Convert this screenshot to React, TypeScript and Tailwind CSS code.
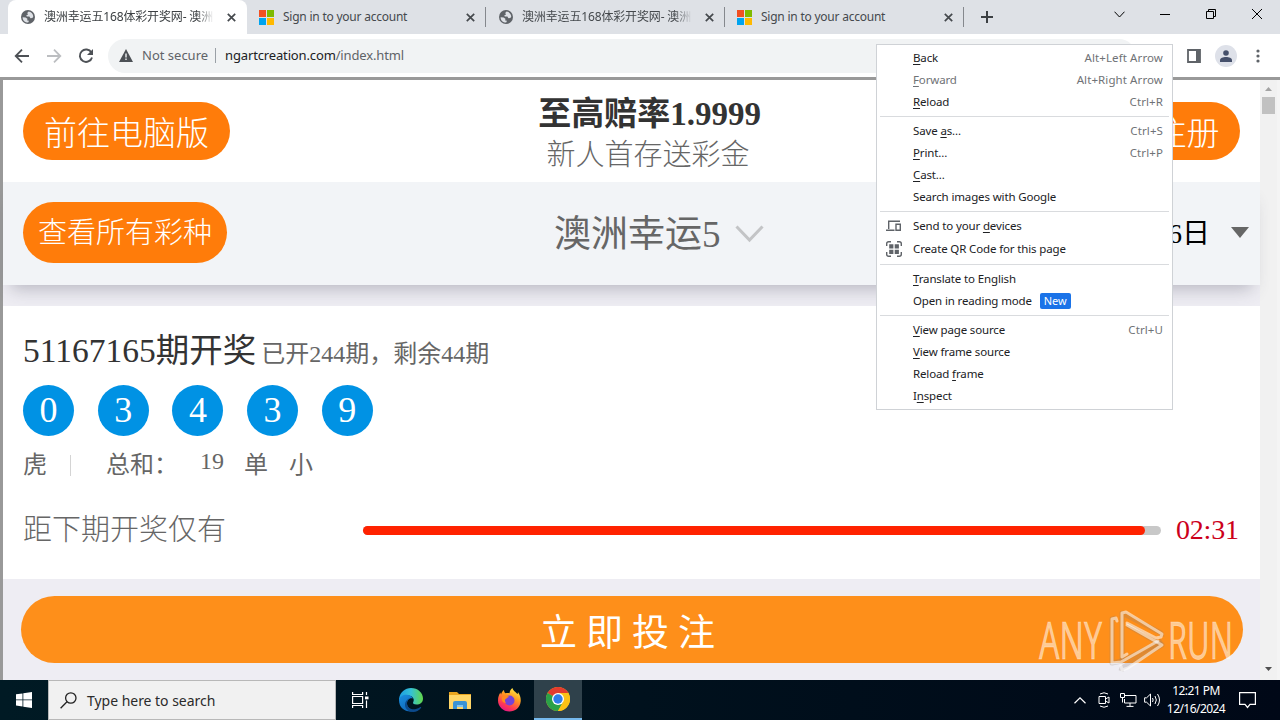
import React from 'react';

interface TabProps {
  kind: 'globe' | 'microsoft';
  title: string;
  active?: boolean;
  divider?: boolean;
}

const tabs: TabProps[] = [
  { kind: 'globe', title: '澳洲幸运五168体彩开奖网- 澳洲', active: true },
  { kind: 'microsoft', title: 'Sign in to your account', divider: true },
  { kind: 'globe', title: '澳洲幸运五168体彩开奖网- 澳洲', divider: true },
  { kind: 'microsoft', title: 'Sign in to your account', divider: true },
];

const GlobeIcon = () => (
  <svg width="14" height="14" viewBox="0 0 14 14">
    <circle cx="7" cy="7" r="7" fill="#5f6368" />
    <path d="M1.6 7.2 4.6 7.4 6.4 8.8 6.2 10.6 8 10.8 7.2 12.6C4.4 12.8 1.6 10.6 1.6 7.2ZM7.6 1.6 6.2 3 7 4.4 5.2 5.6 5.8 6.6 8.4 6.6 9.4 8.2 11.4 8 12.3 6.4C12 4 10 1.8 7.6 1.6Z" fill="#dee1e6" />
  </svg>
);

const MicrosoftIcon = () => (
  <svg width="15" height="15" viewBox="0 0 15 15">
    <path fill="#f25022" d="M0 0h7v7H0z" />
    <path fill="#7fba00" d="M8 0h7v7H8z" />
    <path fill="#00a4ef" d="M0 8h7v7H0z" />
    <path fill="#ffb900" d="M8 8h7v7H8z" />
  </svg>
);

const Tab: React.FC<TabProps> = ({ kind, title, active, divider }) => (
  <div
    className={`relative flex h-full w-[239px] items-center ${
      active ? 'rounded-t-lg bg-white text-[#3c4043]' : 'text-[#45494d]'
    }`}
  >
    <span className={`flex w-6 shrink-0 ${kind === 'globe' ? 'ml-[13px]' : 'ml-3'}`}>
      {kind === 'globe' ? <GlobeIcon /> : <MicrosoftIcon />}
    </span>
    <span
      className={`w-[170px] text-[12px] leading-4 whitespace-nowrap ${
        kind === 'globe'
          ? '-ml-px tracking-[-0.15px] [mask-image:linear-gradient(to_right,black_90%,transparent)]'
          : 'tracking-[-0.23px]'
      }`}
    >
      {title}
    </span>
    <svg className="ml-[13px]" width="9" height="9" viewBox="0 0 9 9">
      <path d="M.8.8 8.2 8.2M8.2.8.8 8.2" stroke="#45494d" strokeWidth="1.7" />
    </svg>
    {divider && <span className="ml-auto h-5 w-px bg-[#85888d]" />}
  </div>
);

const TabStrip = () => (
  <div className="flex h-[34px] bg-[#dee1e6] pl-2">
    {tabs.map((tab, index) => (
      <Tab key={index} {...tab} />
    ))}
    <svg className="mt-[11px] ml-[17px]" width="12" height="12" viewBox="0 0 12 12">
      <path d="M6 0v12M0 6h12" stroke="#3c4043" strokeWidth="2" />
    </svg>
    <div className="ml-auto flex h-7 items-center text-black">
      <span className="flex w-[46px] justify-center">
        <svg width="11" height="7" viewBox="0 0 11 7" fill="none" stroke="currentColor">
          <path d="M.5.7 5.5 6 10.5.7" />
        </svg>
      </span>
      <span className="flex w-[46px] justify-center">
        <svg width="10" height="10" viewBox="0 0 10 10" fill="none" stroke="currentColor">
          <path d="M0 5.5h10" />
        </svg>
      </span>
      <span className="flex w-[46px] justify-center">
        <svg width="10" height="10" viewBox="0 0 10 10" fill="none" stroke="currentColor">
          <path d="M.5 2.500h7v7h-7zM2.5 2.500v-2h7v7h-2" />
        </svg>
      </span>
      <span className="flex w-[46px] justify-center">
        <svg width="10" height="10" viewBox="0 0 10 10" fill="none" stroke="currentColor">
          <path d="M0 0 10 10M10 0 0 10" />
        </svg>
      </span>
    </div>
  </div>
);

const Toolbar = () => (
  <div className="flex h-[43px] items-center bg-white pl-[14px]">
    <svg width="16" height="16" viewBox="0 0 16 16" fill="none" stroke="#4d5156" strokeWidth="1.8">
      <path d="M15 8H2M8 1.7 1.7 8 8 14.3" />
    </svg>
    <svg className="ml-4" width="16" height="16" viewBox="0 0 16 16" fill="none" stroke="#bcbec1" strokeWidth="1.8">
      <path d="M1 8h13M8 1.7 14.3 8 8 14.3" />
    </svg>
    <svg className="ml-4" width="16" height="16" viewBox="0 0 16 16">
      <path d="M13.4 4.6A6.2 6.2 0 1 0 14 9.4" fill="none" stroke="#4d5156" strokeWidth="1.9" />
      <path d="M15 1v6H9z" fill="#4d5156" />
    </svg>
    <div className="ml-[14px] flex h-[34px] w-[1028px] items-center rounded-full bg-[#f1f3f4] pl-[11px] text-[13px]">
      <svg width="14" height="13" viewBox="0 0 14 13">
        <path d="M7 0 14 13H0z" fill="#4d5156" />
        <path d="M7 4.5v4M7 9.6v1.5" stroke="#f1f3f4" strokeWidth="1.4" />
      </svg>
      <span className="ml-[9px] w-[73px] whitespace-nowrap text-[#5f6368]">Not secure</span>
      <span className="h-[15px] w-px bg-[#9aa0a6]" />
      <span className="ml-[9px] tracking-[-0.14px] whitespace-nowrap text-[#202124]">
        ngartcreation.com<span className="text-[#5f6368]">/index.html</span>
      </span>
    </div>
    <svg className="ml-[51px]" width="14" height="14" viewBox="0 0 14 14">
      <path d="M1 1h12v12H1z" fill="none" stroke="#5f6368" strokeWidth="1.8" />
      <path d="M9 1h4v12H9z" fill="#5f6368" />
    </svg>
    <span className="ml-[14px] flex h-[22px] w-[22px] items-center justify-center rounded-full bg-[#dee1e9]">
      <svg width="12" height="12" viewBox="0 0 12 12" fill="#45506b">
        <circle cx="6" cy="3" r="2.8" />
        <path d="M0 12V10.200C0 8 3 7 6 7s6 1 6 3.200V12z" />
      </svg>
    </span>
    <svg className="ml-[19px]" width="4" height="14" viewBox="0 0 4 14" fill="#5f6368">
      <circle cx="2" cy="2" r="1.6" />
      <circle cx="2" cy="7" r="1.6" />
      <circle cx="2" cy="12" r="1.6" />
    </svg>
  </div>
);

const balls = [0, 3, 4, 3, 9];

const Page = () => (
  <div className="flex w-[1257px] flex-col bg-[#eeedf3] font-['Liberation_Serif','Noto_Sans_CJK_SC',serif] font-light whitespace-nowrap">
    <div className="flex h-[102px] items-start justify-between bg-white pt-[22px] pr-5 pl-5">
      <button className="h-[58px] w-[207px] rounded-full bg-[#ff7c0a] pt-[2px] text-[33px] leading-[60px] text-white">
        前往电脑版
      </button>
      <div className="-mt-[8px] mr-[66px] ml-auto flex flex-col items-center">
        <div className="h-[40px] text-[33px] leading-[41px] font-bold text-[#333]">至高赔率1.9999</div>
        <div className="mr-[3px] h-[40px] text-[29px] leading-[43px] text-[#666]">新人首存送彩金</div>
      </div>
      <button className="ml-[306px] h-[58px] w-[107px] rounded-full bg-[#ff7c0a] pt-[2px] text-[33px] leading-[60px] text-white">
        注册
      </button>
    </div>
    <div className="relative flex h-[103px] items-center bg-[#f2f4f7] pb-[2px] pl-5 shadow-[0_12px_16px_-8px_rgba(60,60,80,0.3)]">
      <button className="h-[61px] w-[204px] rounded-full bg-[#ff7c0a] pt-px text-[29px] leading-[60px] text-white">
        查看所有彩种
      </button>
      <span className="mt-[4px] ml-[327px] text-[37px] leading-[50px] font-normal text-[#666]">澳洲幸运5</span>
      <svg className="mt-[2px] ml-[14px]" width="29" height="18" viewBox="0 0 29 18">
        <path d="M1.5 1.5 14.5 15 27.5 1.5" fill="none" stroke="#c3c4c6" strokeWidth="3" />
      </svg>
      <span className="mt-[3px] mr-[21px] ml-auto text-[28px] leading-[40px] font-normal text-black">12月16日</span>
      <svg className="mr-[11px]" width="18" height="11" viewBox="0 0 18 11">
        <path d="M0 0h18L9 11z" fill="#666" />
      </svg>
    </div>
    <div className="relative mt-[21px] flex h-[273px] flex-col bg-white pl-5 text-[#666]">
      <div className="mt-[23px] flex h-[44px] items-baseline font-normal">
        <span className="text-[33.5px] leading-[44px] text-[#333]">51167165期开奖</span>
        <span className="ml-[5px] text-[24px] leading-[44px]">已开244期，剩余44期</span>
      </div>
      <div className="mt-3 flex gap-[23.7px]">
        {balls.map((ball, index) => (
          <span key={index} className="h-[51px] w-[51px] rounded-full bg-[#0092e4] text-center text-[36px] leading-[50px] text-white">
            {ball}
          </span>
        ))}
      </div>
      <div className="mt-[11px] flex h-[36px] items-center text-[24px] leading-[36px] font-normal">
        <span>虎</span>
        <span className="ml-[23px] h-[21px] w-px bg-[#d4d4d4]" />
        <span className="ml-[35px] w-[94px]">总和：</span>
        <span className="-mt-2">19</span>
        <span className="ml-5">单</span>
        <span className="ml-[21px]">小</span>
      </div>
      <div className="mt-[27px] flex h-[40px] items-center">
        <span className="w-[340px] text-[29px] leading-[40px]">距下期开奖仅有</span>
        <span className="h-[9px] w-[798px] rounded-full bg-[#c8c8c8]">
          <span className="block h-full w-[782px] rounded-full bg-[#ff2200]" />
        </span>
        <span className="ml-[15px] text-[28px] leading-[40px] tracking-[-0.2px] text-[#cc001b]">02:31</span>
      </div>
    </div>
    <button className="mt-[17px] ml-[18px] h-[67px] w-[1222px] rounded-full bg-[#fe8f1a] pt-[3px] text-[37px] leading-[70px] font-normal tracking-[9px] text-white">
      立即投注
    </button>
  </div>
);

const Scrollbar = () => (
  <div className="flex w-[17px] flex-col items-center bg-[#f1f1f1] pt-[7px] pb-[9px]">
    <svg width="7" height="4" viewBox="0 0 7 4">
      <path d="M3.5 0 7 4H0z" fill="#a3a3a3" />
    </svg>
    <span className="mt-[6px] h-[17px] w-[13px] bg-[#c1c1c1]" />
    <svg className="mt-auto" width="7" height="4" viewBox="0 0 7 4">
      <path d="M0 0h7L3.5 4z" fill="#505050" />
    </svg>
  </div>
);

interface MenuEntry {
  label: string;
  // index of the underlined access key
  accessKey?: number;
  shortcut?: string;
  disabled?: boolean;
  badge?: string;
  icon?: 'devices' | 'qr';
}

const menuGroups: MenuEntry[][] = [
  [
    { label: 'Back', accessKey: 0, shortcut: 'Alt+Left Arrow' },
    { label: 'Forward', accessKey: 0, shortcut: 'Alt+Right Arrow', disabled: true },
    { label: 'Reload', accessKey: 0, shortcut: 'Ctrl+R' },
  ],
  [
    { label: 'Save as...', accessKey: 5, shortcut: 'Ctrl+S' },
    { label: 'Print...', accessKey: 0, shortcut: 'Ctrl+P' },
    { label: 'Cast...', accessKey: 0 },
    { label: 'Search images with Google' },
  ],
  [
    { label: 'Send to your devices', accessKey: 13, icon: 'devices' },
    { label: 'Create QR Code for this page', icon: 'qr' },
  ],
  [
    { label: 'Translate to English', accessKey: 0 },
    { label: 'Open in reading mode', badge: 'New' },
  ],
  [
    { label: 'View page source', accessKey: 0, shortcut: 'Ctrl+U' },
    { label: 'View frame source', accessKey: 0 },
    { label: 'Reload frame', accessKey: 7 },
    { label: 'Inspect', accessKey: 1 },
  ],
];

const MenuIcon: React.FC<{ icon: 'devices' | 'qr' }> = ({ icon }) =>
  icon === 'devices' ? (
    <svg width="16" height="12" viewBox="0 0 16 12" fill="none" stroke="#5f6368" strokeWidth="1.4">
      <path d="M14 1.200H2.700V9M0 10.300h8.500M10 4.200h4.300v6.100H10z" />
    </svg>
  ) : (
    <svg width="16" height="16" viewBox="0 0 16 16" fill="none" stroke="#5f6368" strokeWidth="1.4">
      <path d="M.7 5V2.700Q.7.700 2.700.700H5M11 .7h2.300Q15.300.700 15.300 2.700V5M15.300 11v2.300q0 2-2 2H11M5 15.300H2.700Q.7 15.300.7 13.300V11" />
      <path d="M3.200 3.200h4.200v4.200H3.200zM8.700 3.200h4.200v4.200H8.700zM3.200 8.700h4.200v4.200H3.200zM8.700 8.700h4.200v4.200H8.700z" fill="#5f6368" stroke="none" />
    </svg>
  );

const MenuLabel: React.FC<{ entry: MenuEntry }> = ({ entry }) => {
  const { label, accessKey } = entry;
  if (accessKey === undefined) return <span>{label}</span>;
  return (
    <span>
      {label.slice(0, accessKey)}
      <span className="underline underline-offset-2">{label[accessKey]}</span>
      {label.slice(accessKey + 1)}
    </span>
  );
};

const ContextMenu = () => (
  <div className="absolute top-[44px] left-[876px] z-10 h-[366px] w-[297px] border border-[#cfd2d6] bg-white pt-[2px] text-[11.5px] text-[#202124]">
    {menuGroups.map((group, index) => (
      <div key={index}>
        {index > 0 && (
          <div className="flex h-[7px] items-center px-[3px]">
            <span className="h-px w-full bg-[#d9dbde]" />
          </div>
        )}
        {group.map((entry) => (
          <div
            key={entry.label}
            className={`flex items-center pr-[9px] whitespace-nowrap ${entry.icon ? 'h-[23px] pb-[2px]' : 'h-[22px]'} ${
              entry.disabled ? 'text-[#6f7276]' : ''
            }`}
          >
            <span className="flex w-9 justify-center pr-[2px]">{entry.icon && <MenuIcon icon={entry.icon} />}</span>
            <span className="tracking-[-0.14px]">
              <MenuLabel entry={entry} />
            </span>
            {entry.badge && (
              <span className="ml-2 h-4 rounded-[2px] bg-[#1a73e8] px-1 text-[11px] leading-4 tracking-[-0.1px] text-white">
                {entry.badge}
              </span>
            )}
            {entry.shortcut && <span className="ml-auto tracking-[0.1px] text-[#6f7276]">{entry.shortcut}</span>}
          </div>
        ))}
      </div>
    ))}
  </div>
);

const Watermark = () => (
  <svg className="absolute top-[606px] left-[1034px]" width="204" height="70" viewBox="0 0 204 70">
    <g fill="#fff" fillOpacity="0.55" stroke="#fff" strokeOpacity="0.3" strokeWidth="0.8" fontFamily="Open Sans, sans-serif" fontSize="51">
      <text x="5" y="53" textLength="63" lengthAdjust="spacingAndGlyphs">ANY</text>
      <text x="134" y="53" textLength="65" lengthAdjust="spacingAndGlyphs">RUN</text>
    </g>
    <g fill="none" stroke="#8b7d75" strokeOpacity="0.25" strokeWidth="5" strokeLinejoin="round">
      <path d="M82 12 78 13V57L88 55 128 35" />
      <path d="M88 54V7L127 27 128 31M93 19 128 39 88 62 87 65" />
    </g>
    <g fill="none" stroke="#fff" strokeOpacity="0.55" strokeWidth="3" strokeLinejoin="round" strokeLinecap="round">
      <path d="M83 15 82 12 78 13V57L87 56 124 35" />
      <path d="M93 48 88 51V7L92 6 128 28 127 31 122 32 93 17" />
      <path d="M93 19 128 39 94 62 88 64 87 60" />
    </g>
  </svg>
);

const EdgeIcon = () => (
  <svg width="24" height="24" viewBox="0 0 24 24">
    <defs>
      <linearGradient id="edge-top" x1="0" y1="0.5" x2="1" y2="0.5">
        <stop offset="0" stopColor="#1b9de2" />
        <stop offset="0.5" stopColor="#35c1d6" />
        <stop offset="1" stopColor="#62d848" />
      </linearGradient>
      <linearGradient id="edge-low" x1="0" y1="0" x2="0.6" y2="1">
        <stop offset="0" stopColor="#1a8fe0" />
        <stop offset="1" stopColor="#0f67b8" />
      </linearGradient>
    </defs>
    <path d="M0 11C1 4 6 0 12 0c7 0 12 5 12 10.500 0 4-3 6-6.500 6-3 0-4-1.200-3.300-2.300C16 11 13.500 7.500 9 7.500 5 7.500 1.500 9 0 13z" fill="url(#edge-top)" />
    <path d="M0 12c.5-3.500 4-5.500 8-5.300 3 .2 5.500 1.800 6 4-2-1.200-6 .3-6 4.800 0 4.500 4.500 7.500 9 6.500C10 26 0 22 0 12z" fill="url(#edge-low)" />
    <path d="M8 14c-.8 6 5.500 10 13 5.200 1-.6 1.500 0 1 .8C17 27 6 24 6 17c0-3.500 2.500-6 5-7-1.500 1-2.700 2-3 4z" fill="#0c4a8c" />
  </svg>
);

const FolderIcon = () => (
  <svg width="22" height="19" viewBox="0 0 22 19">
    <path d="M0 1h8l2 2h12v15H0z" fill="#e9a51f" />
    <path d="M0 4h22v14H0z" fill="#ffd667" />
    <path d="M4 18v-6q0-2 2-2h10q2 0 2 2v6h-4v-4H8v4z" fill="#3a93d4" />
    <path d="M8 14h6v2H8z" fill="#83c4ee" />
  </svg>
);

const FirefoxIcon = () => (
  <svg width="23" height="24" viewBox="0 0 23 24">
    <defs>
      <linearGradient id="fox" x1="0.8" y1="0" x2="0.3" y2="1">
        <stop offset="0" stopColor="#fff14a" />
        <stop offset="0.4" stopColor="#ff9a1f" />
        <stop offset="0.75" stopColor="#ff3b52" />
        <stop offset="1" stopColor="#e31587" />
      </linearGradient>
    </defs>
    <path d="M14.500 0c.5 3 3 3.500 5 6 .5-.5.500-1.200.4-2C22 7 23 10 22.700 13.500 22 20 17 23.500 11.500 23.500 5 23.500 0 18.500 0 12.500 0 9 1 6.500 2.500 4.500c0 .8.200 1.500.6 2C3.500 4.500 4.500 3 6 2c0 1.500.6 2.500 1.500 3.300 1.500-.5 2.800-.4 4 0C11.700 3 12.700 1 14.500 0z" fill="url(#fox)" />
    <circle cx="11.5" cy="12.5" r="5" fill="#7542d8" />
    <path d="M4 9c2-2 5-2 7 0-1.500.3-2 1.200-3.500 2C6.500 12 7 14 8 15c-3 0-5-3-4-6z" fill="#ff8a1d" />
  </svg>
);

const ChromeIcon = () => (
  <svg width="24" height="24" viewBox="0 0 24 24">
    <circle cx="12" cy="12" r="12" fill="#fbc116" />
    <path d="M12 12 1.600 6A12 12 0 0 1 22.400 6z" fill="#e33b2e" />
    <path d="M1.600 6A12 12 0 0 0 12 24L17 14.900 12 12z" fill="#2aa148" />
    <path d="M12 6h10.400A12 12 0 0 1 12 24l5.200-9z" fill="#fbc116" />
    <circle cx="12" cy="12" r="6" fill="#fff" />
    <circle cx="12" cy="12" r="4.7" fill="#2f7de9" />
  </svg>
);

const Taskbar = () => (
  <div className="flex h-10 items-center bg-linear-to-r from-[#001a24] via-[#00111d] to-[#000817] text-white">
    <span className="flex w-12 justify-center">
      <svg width="16" height="16" viewBox="0 0 16 16" fill="#fff">
        <path d="M0 2.300 6.500 1.400V7.500H0zM7.300 1.300 16 0V7.500H7.300zM0 8.300H6.500V14.500L0 13.600zM7.300 8.300H16V16L7.300 14.700z" />
      </svg>
    </span>
    <div className="flex h-10 w-[288px] items-center border border-[#b8b8b8] bg-[#f1f1f1] pl-[11px] text-[#2b2b2b]">
      <svg width="17" height="17" viewBox="0 0 17 17" fill="none" stroke="#222" strokeWidth="1.3">
        <circle cx="10.8" cy="6" r="5.2" />
        <path d="M7 9.800.6 16.200" />
      </svg>
      <span className="ml-[10px] text-[14px] tracking-[-0.03px]">Type here to search</span>
    </div>
    <span className="flex w-12 justify-center">
      <svg width="17" height="16" viewBox="0 0 17 16" fill="none" stroke="#fff" strokeWidth="1.2">
        <path d="M.6 0v2.500h10V0M.6 4.500h10v7H.6zM.6 16v-2.500h10V16M14.500 0v3M14.500 8.500V16" />
        <path d="M13 4.500h3.500v2.800H13z" fill="#fff" stroke="none" />
      </svg>
    </span>
    <span className="ml-[3px] flex w-12 justify-center"><EdgeIcon /></span>
    <span className="ml-px flex w-12 justify-center"><FolderIcon /></span>
    <span className="ml-px flex w-12 justify-center"><FirefoxIcon /></span>
    <span className="ml-px flex h-full w-12 items-center justify-center border-b-2 border-[#76b9ed] bg-[#2f414b]">
      <ChromeIcon />
    </span>
    <div className="ml-auto flex items-center">
      <svg width="12" height="7" viewBox="0 0 12 7" fill="none" stroke="#fff" strokeWidth="1.2">
        <path d="M.5 6.300 6 .9l5.500 5.400" />
      </svg>
      <svg className="ml-[12px]" width="12" height="16" viewBox="0 0 12 16" fill="none" stroke="#fff">
        <path d="M2 2q4-2.500 8 0M2 14q4 2.500 8 0M1 4.500h6.500v7H1zM7.500 7 11 5v6L7.500 9" />
      </svg>
      <svg className="ml-[10px]" width="17" height="14" viewBox="0 0 17 14" fill="none" stroke="#fff">
        <path d="M5 2.500h11v7.500H4.500V6M10 10v3M6.500 13.400h7M.5.500h4v4h-4zM2.500 4.500v5" />
      </svg>
      <svg className="ml-[7px]" width="17" height="14" viewBox="0 0 17 14" fill="none" stroke="#fff">
        <path d="M.6 4.800h2L6.500 1v12L2.600 9.200h-2zM8.500 5q1.300 2 0 4M11 3q2.700 4 0 8M13.500 1q4 6 0 12" />
      </svg>
      <div className="ml-[5px] flex w-[60px] flex-col items-center text-[12px] leading-[18px] tracking-[-0.55px] whitespace-nowrap">
        <span>12:21 PM</span>
        <span>12/16/2024</span>
      </div>
      <svg className="mr-[24px] ml-[13px]" width="17" height="17" viewBox="0 0 17 17" fill="none" stroke="#fff" strokeWidth="1.2">
        <path d="M.6.600h15.800v11.800H11L8.500 15.500 6 12.400H.6z" />
      </svg>
    </div>
  </div>
);

const App = () => (
  <div className="relative flex h-[720px] w-[1280px] flex-col overflow-hidden bg-white font-['Noto_Sans','Noto_Sans_CJK_SC',sans-serif]">
    <TabStrip />
    <Toolbar />
    <div className="flex h-[603px] border-t-3 border-l-3 border-[#999]">
      <Page />
      <Scrollbar />
      <span className="w-[3px] bg-[#f4f4f4]" />
    </div>
    <Taskbar />
    <ContextMenu />
    <Watermark />
  </div>
);

export default App;
